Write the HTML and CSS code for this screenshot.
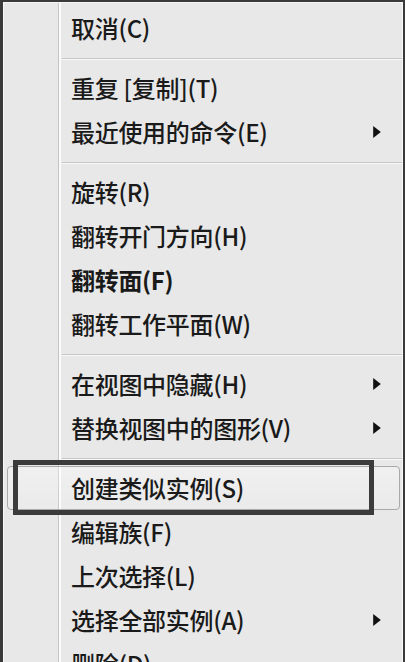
FILE: index.html
```html
<!DOCTYPE html>
<html lang="zh-CN">
<head>
<meta charset="utf-8">
<title>右键菜单</title>
<link rel="stylesheet" href="styles.css">
</head>
<body>
<div class="frame">
  <ul class="menu">
    <li class="item">取消(C)</li>
    <li class="sep"></li>
    <li class="item">重复 [复制](T)</li>
    <li class="item has-sub">最近使用的命令(E)<svg class="arrow" width="7" height="11" viewBox="0 0 7 11"><polygon points="0,0 7,5.5 0,11" fill="#111"/></svg></li>
    <li class="sep"></li>
    <li class="item">旋转(R)</li>
    <li class="item">翻转开门方向(H)</li>
    <li class="item strong">翻转面(F)</li>
    <li class="item">翻转工作平面(W)</li>
    <li class="sep"></li>
    <li class="item has-sub">在视图中隐藏(H)<svg class="arrow" width="7" height="11" viewBox="0 0 7 11"><polygon points="0,0 7,5.5 0,11" fill="#111"/></svg></li>
    <li class="item has-sub">替换视图中的图形(V)<svg class="arrow" width="7" height="11" viewBox="0 0 7 11"><polygon points="0,0 7,5.5 0,11" fill="#111"/></svg></li>
    <li class="sep"></li>
    <li class="item hover">创建类似实例(S)<span class="mark"></span></li>
    <li class="item">编辑族(F)</li>
    <li class="item">上次选择(L)</li>
    <li class="item has-sub">选择全部实例(A)<svg class="arrow" width="7" height="11" viewBox="0 0 7 11"><polygon points="0,0 7,5.5 0,11" fill="#111"/></svg></li>
    <li class="item">删除(D)</li>
  </ul>
</div>
</body>
</html>
```

FILE: styles.css
```css
html, body {
  margin: 0;
  padding: 0;
  background: #3a3a3a;
  height: 100%;
  overflow: hidden;
}

.frame {
  padding: 2px 2px 0 3px;
}

.menu {
  list-style: none;
  margin: 0;
  padding: 3px 0 0 0;
  width: 398px;
  border: 1px solid #f7f7f7;
  border-bottom: none;
  background-color: #e8e8e8;
  background-image: linear-gradient(to right,
    transparent 54px, #c4c4c4 54px, #c4c4c4 55px,
    #fbfbfb 55px, #fbfbfb 57px, transparent 57px);
  min-height: 700px;
  font-family: "Noto Sans CJK SC", "Noto Sans", sans-serif;
  font-size: 24px;
  font-weight: 500;
  color: #1a1a1a;
}

.item {
  height: 44px;
  line-height: 44px;
  padding: 0 21px 0 67px;
  display: flex;
  align-items: center;
  justify-content: space-between;
  white-space: nowrap;
  letter-spacing: -0.3px;
}

.item.strong {
  font-weight: 700;
}

.arrow {
  flex: none;
  width: 8px;
  height: 12px;
}

.sep {
  height: 16px;
  margin-left: 58px;
  box-sizing: border-box;
  padding-top: 8px;
}

.sep::before {
  content: "";
  display: block;
  height: 1px;
  background: #c6c6c6;
  border-bottom: 1px solid #fafafa;
}

.item.hover {
  position: relative;
  margin: 0 2px 0 3px;
  height: 44px;
  box-sizing: border-box;
  padding-left: 63px;
  border: 1px solid #a9a9a9;
  border-radius: 4px;
  background: linear-gradient(to bottom, rgba(255,255,255,0.35), rgba(255,255,255,0.1));
}

.mark {
  position: absolute;
  left: 5px;
  top: -7px;
  width: 361px;
  height: 55px;
  box-sizing: border-box;
  border: 5px solid #3b3b3b;
}
```
